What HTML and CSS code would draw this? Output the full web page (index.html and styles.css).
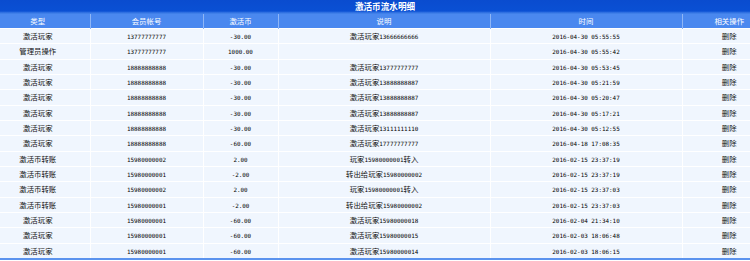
FILE: index.html
```html
<!DOCTYPE html>
<html>
<head>
<meta charset="utf-8">
<link rel="stylesheet" href="styles.css">
</head>
<body>
<div class="panel">
  <div class="title">激活币流水明细</div>
  <table class="grid">
    <colgroup>
      <col class="c1"><col class="c2"><col class="c3"><col class="c4"><col class="c5"><col class="c6">
    </colgroup>
    <thead>
      <tr><th class="first">类型</th><th>会员帐号</th><th>激活币</th><th>说明</th><th>时间</th><th class="last">相关操作</th></tr>
    </thead>
    <tbody>
      <tr><td class="first">激活玩家</td><td><span class="n">13777777777</span></td><td><span class="n">-30.00</span></td><td>激活玩家<span class="n">13666666666</span></td><td><span class="n">2016-04-30 05:55:55</span></td><td class="last">删除</td></tr>
      <tr><td class="first">管理员操作</td><td><span class="n">13777777777</span></td><td><span class="n">1000.00</span></td><td></td><td><span class="n">2016-04-30 05:55:42</span></td><td class="last">删除</td></tr>
      <tr><td class="first">激活玩家</td><td><span class="n">18888888888</span></td><td><span class="n">-30.00</span></td><td>激活玩家<span class="n">13777777777</span></td><td><span class="n">2016-04-30 05:53:45</span></td><td class="last">删除</td></tr>
      <tr><td class="first">激活玩家</td><td><span class="n">18888888888</span></td><td><span class="n">-30.00</span></td><td>激活玩家<span class="n">13888888887</span></td><td><span class="n">2016-04-30 05:21:59</span></td><td class="last">删除</td></tr>
      <tr><td class="first">激活玩家</td><td><span class="n">18888888888</span></td><td><span class="n">-30.00</span></td><td>激活玩家<span class="n">13888888887</span></td><td><span class="n">2016-04-30 05:20:47</span></td><td class="last">删除</td></tr>
      <tr><td class="first">激活玩家</td><td><span class="n">18888888888</span></td><td><span class="n">-30.00</span></td><td>激活玩家<span class="n">13888888887</span></td><td><span class="n">2016-04-30 05:17:21</span></td><td class="last">删除</td></tr>
      <tr><td class="first">激活玩家</td><td><span class="n">18888888888</span></td><td><span class="n">-30.00</span></td><td>激活玩家<span class="n">13111111110</span></td><td><span class="n">2016-04-30 05:12:55</span></td><td class="last">删除</td></tr>
      <tr><td class="first">激活玩家</td><td><span class="n">18888888888</span></td><td><span class="n">-60.00</span></td><td>激活玩家<span class="n">17777777777</span></td><td><span class="n">2016-04-18 17:08:35</span></td><td class="last">删除</td></tr>
      <tr><td class="first">激活币转账</td><td><span class="n">15980000002</span></td><td><span class="n">2.00</span></td><td>玩家<span class="n">15980000001</span>转入</td><td><span class="n">2016-02-15 23:37:19</span></td><td class="last">删除</td></tr>
      <tr><td class="first">激活币转账</td><td><span class="n">15980000001</span></td><td><span class="n">-2.00</span></td><td>转出给玩家<span class="n">15980000002</span></td><td><span class="n">2016-02-15 23:37:19</span></td><td class="last">删除</td></tr>
      <tr><td class="first">激活币转账</td><td><span class="n">15980000002</span></td><td><span class="n">2.00</span></td><td>玩家<span class="n">15980000001</span>转入</td><td><span class="n">2016-02-15 23:37:03</span></td><td class="last">删除</td></tr>
      <tr><td class="first">激活币转账</td><td><span class="n">15980000001</span></td><td><span class="n">-2.00</span></td><td>转出给玩家<span class="n">15980000002</span></td><td><span class="n">2016-02-15 23:37:03</span></td><td class="last">删除</td></tr>
      <tr><td class="first">激活玩家</td><td><span class="n">15980000001</span></td><td><span class="n">-60.00</span></td><td>激活玩家<span class="n">15980000018</span></td><td><span class="n">2016-02-04 21:34:10</span></td><td class="last">删除</td></tr>
      <tr><td class="first">激活玩家</td><td><span class="n">15980000001</span></td><td><span class="n">-60.00</span></td><td>激活玩家<span class="n">15980000015</span></td><td><span class="n">2016-02-03 18:06:48</span></td><td class="last">删除</td></tr>
      <tr><td class="first">激活玩家</td><td><span class="n">15980000001</span></td><td><span class="n">-60.00</span></td><td>激活玩家<span class="n">15980000014</span></td><td><span class="n">2016-02-03 18:06:15</span></td><td class="last">删除</td></tr>
    </tbody>
  </table>
</div>
</body>
</html>
```

FILE: styles.css
```css
html, body {
  margin: 0;
  padding: 0;
  background: #ffffff;
}
body {
  font-family: "Noto Sans CJK SC", "Noto Sans", sans-serif;
  color: #111;
  overflow: hidden;
}
.panel {
  width: 750px;
  border-bottom: 2px solid #5b93ee;
}
.title {
  height: 13px;
  line-height: 13px;
  background: linear-gradient(#0a4ccf, #0a50d4 85%, #3b7ae6);
  color: #ffffff;
  font-weight: bold;
  font-size: 8.6px;
  text-align: center;
  padding-left: 20px;
  overflow: hidden;
}
.grid {
  width: 750px;
  border-collapse: collapse;
  table-layout: fixed;
}
.c1 { width: 90px; }
.c2 { width: 113px; }
.c3 { width: 75px; }
.c4 { width: 212px; }
.c5 { width: 192px; }
.c6 { width: 68px; }
th, td {
  padding: 0;
  text-align: center;
  font-size: 7.4px;
  white-space: nowrap;
  overflow: hidden;
}
th {
  height: 14px;
  line-height: 14px;
  background: #4a88ef;
  color: #ffffff;
  font-weight: normal;
  border-left: 1px solid #8fb6f6;
  border-top: 1px solid #3f7fe8;
}
td {
  height: 14.33px;
  line-height: 14.33px;
  background: #f0f6fe;
  border-left: 1px solid #ffffff;
  border-top: 1px solid #ffffff;
}
th.first, td.first { border-left: none; }
.first { padding-right: 14px; }
.last { padding-left: 26px; }
.n {
  font-family: "DejaVu Sans Mono", "Liberation Mono", monospace;
  font-size: 5.9px;
  line-height: 1;
  color: #000;
}
```
